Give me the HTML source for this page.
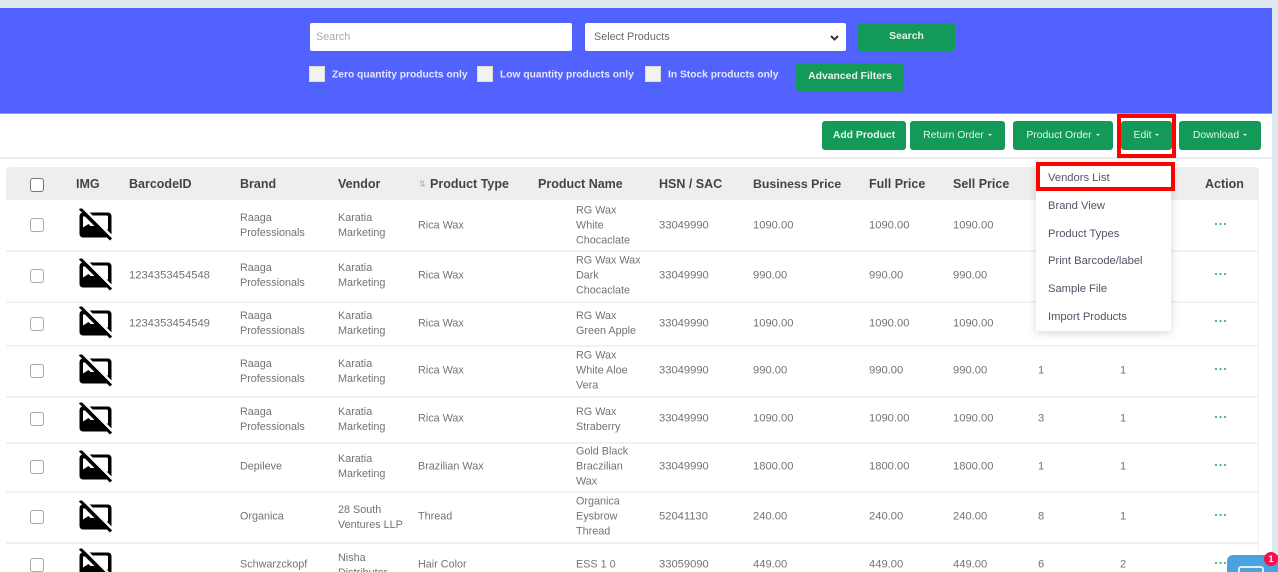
<!DOCTYPE html>
<html><head><meta charset="utf-8"><title>Products</title>
<style>
html,body{margin:0;padding:0}
html{width:1278px;height:572px;overflow:hidden}
body{width:1278px;height:572px;overflow:hidden;position:relative;background:#fff;font-family:"Liberation Sans",sans-serif}
div,span{box-sizing:border-box}
.a{position:absolute}
.c{position:absolute;transform:translateY(-50%);margin-top:1px;font-size:10.8px;line-height:15px;color:#737373;white-space:nowrap}
.n{font-size:11.2px}
.h{position:absolute;top:184px;transform:translateY(-50%);font-size:12.5px;font-weight:bold;color:#444;white-space:nowrap}
.b{position:absolute;background:#149a58;border-radius:3px;color:#e6f5ec;font-size:10.4px;text-align:center;white-space:nowrap}
.t{top:121px;height:29px;line-height:30px}
.t i{display:inline-block;width:0;height:0;border:2.5px solid transparent;border-top-color:#e6f5ec;border-bottom:0;margin-left:4px;vertical-align:2px}
.ck{position:absolute;left:30px;width:14px;height:14px;border:1.5px solid #a8a8a8;border-radius:3px;background:#fff;transform:translateY(-50%)}
.sq{position:absolute;top:66px;width:16px;height:16px;background:#f2f2f2;border:1px solid #ddd}
.l{position:absolute;top:75px;transform:translateY(-50%);font-size:10.25px;font-weight:bold;color:#e4e6ff;white-space:nowrap}
.ln{position:absolute;left:6px;width:1253px;height:2px;background:#f2f2f2}
.d{position:absolute;left:1215px;width:2.4px;height:2.4px;border-radius:50%;background:#2a9d6b;box-shadow:4.5px 0 #2a9d6b,9px 0 #2a9d6b}
.m{position:absolute;left:1048px;transform:translateY(-50%);margin-top:1px;font-size:11.2px;color:#555266;white-space:nowrap}
.ic{position:absolute;left:79px;width:33px;height:33px;transform:translateY(-50%)}
</style></head><body>
<svg width="0" height="0" style="position:absolute"><defs><symbol id="x" viewBox="0 0 33 33">
<rect x="0.500" y="4" width="32" height="25" rx="3.500" fill="#000"/>
<path d="M10 7H27.500a1.500 1.500 0 0 1 1.500 1.500V21L25 21Z" fill="#fff"/>
<path d="M4 8H6L13 15L15.500 17.500H11.500L9.500 15.500L4 19Z" fill="#fff"/>
<path d="M1 0L32 31" stroke="#fff" stroke-width="4.500" transform="translate(1.500 -1)"/>
<path d="M1 0L32 31" stroke="#000" stroke-width="3"/>
</symbol></defs></svg>

<div class="a" style="left:0;top:0;width:1278px;height:8px;background:#e1e8f0"></div>
<div class="a" style="left:1272px;top:0;width:6px;height:572px;background:#e1e8f0"></div>
<div class="a" style="left:0;top:8px;width:1272px;height:105px;background:#5262ff"></div>
<div class="a" style="left:0;top:113px;width:1272px;height:1px;background:#6fa5ff"></div>
<div class="a" style="left:0;top:157px;width:1272px;height:2px;background:#ececec"></div>

<div class="a" style="left:310px;top:23px;width:262px;height:28px;background:#fff;border-radius:2px;font-size:10.8px;line-height:28px;padding-left:6px;color:#a9a9a9">Search</div>
<div class="a" style="left:585px;top:23px;width:261px;height:28px;background:#fff;border-radius:2px;font-size:10.8px;line-height:28px;padding-left:9px;color:#6b6b6b">Select Products
<svg class="a" style="left:244px;top:11px" width="11" height="8" viewBox="0 0 11 8"><path d="M2 2L5.500 5.500L9 2" fill="none" stroke="#333" stroke-width="2"/></svg></div>
<div class="b" style="left:858px;top:23px;width:97px;height:28px;line-height:28px;font-weight:bold">Search</div>
<div class="sq" style="left:309px"></div><div class="l" style="left:332px">Zero quantity products only</div>
<div class="sq" style="left:477px"></div><div class="l" style="left:500px">Low quantity products only</div>
<div class="sq" style="left:645px"></div><div class="l" style="left:668px">In Stock products only</div>
<div class="b" style="left:796px;top:63px;width:108px;height:28px;line-height:28px;font-weight:bold">Advanced Filters</div>

<div class="b t" style="left:822px;width:84px;font-weight:bold">Add Product</div>
<div class="b t" style="left:910px;width:95px">Return Order<i></i></div>
<div class="b t" style="left:1013px;width:100px">Product Order<i></i></div>
<div class="b t" style="left:1121px;width:51px">Edit<i></i></div>
<div class="b t" style="left:1179px;width:82px">Download<i></i></div>
<div class="a" style="left:1117px;top:114px;width:59px;height:44px;border:4px solid #f00"></div>

<div class="a" style="left:6px;top:167px;width:1253px;height:33px;background:#eee;border-radius:4px 4px 0 0"></div>
<div class="a" style="left:1258px;top:200px;width:1px;height:372px;background:#f0f0f0"></div>
<div class="ck" style="top:185px;border-color:#777"></div>
<div class="h" style="left:76px">IMG</div>
<div class="h" style="left:129px">BarcodeID</div>
<div class="h" style="left:240px">Brand</div>
<div class="h" style="left:338px">Vendor</div>
<div class="h" style="left:419px;font-size:8px;font-weight:normal;color:#aaa">⇅</div>
<div class="h" style="left:430px">Product Type</div>
<div class="h" style="left:538px">Product Name</div>
<div class="h" style="left:659px">HSN / SAC</div>
<div class="h" style="left:753px;font-size:12.3px">Business Price</div>
<div class="h" style="left:869px">Full Price</div>
<div class="h" style="left:953px">Sell Price</div>
<div class="h" style="left:1171px">t</div>
<div class="h" style="left:1205px">Action</div>

<div class="ln" style="top:250px"></div><div class="ln" style="top:301px"></div><div class="ln" style="top:345px"></div><div class="ln" style="top:396px"></div><div class="ln" style="top:442px"></div><div class="ln" style="top:491px"></div><div class="ln" style="top:542px"></div>

<!-- row 1 -->
<div class="ck" style="top:225px"></div><svg class="ic" style="top:225px"><use href="#x"/></svg>
<div class="c" style="left:240px;top:225px">Raaga<br>Professionals</div><div class="c" style="left:338px;top:225px">Karatia<br>Marketing</div><div class="c" style="left:418px;top:225px">Rica Wax</div><div class="c" style="left:576px;top:225px">RG Wax<br>White<br>Chocaclate</div><div class="c n" style="left:659px;top:225px">33049990</div><div class="c n" style="left:753px;top:225px">1090.00</div><div class="c n" style="left:869px;top:225px">1090.00</div><div class="c n" style="left:953px;top:225px">1090.00</div><div class="d" style="top:223px"></div>
<!-- row 2 -->
<div class="ck" style="top:276px"></div><svg class="ic" style="top:275px"><use href="#x"/></svg>
<div class="c n" style="left:129px;top:275px">1234353454548</div><div class="c" style="left:240px;top:275px">Raaga<br>Professionals</div><div class="c" style="left:338px;top:275px">Karatia<br>Marketing</div><div class="c" style="left:418px;top:275px">Rica Wax</div><div class="c" style="left:576px;top:275px">RG Wax Wax<br>Dark<br>Chocaclate</div><div class="c n" style="left:659px;top:275px">33049990</div><div class="c n" style="left:753px;top:275px">990.00</div><div class="c n" style="left:869px;top:275px">990.00</div><div class="c n" style="left:953px;top:275px">990.00</div><div class="d" style="top:273px"></div>
<!-- row 3 -->
<div class="ck" style="top:324px"></div><svg class="ic" style="top:323px"><use href="#x"/></svg>
<div class="c n" style="left:129px;top:323px">1234353454549</div><div class="c" style="left:240px;top:323px">Raaga<br>Professionals</div><div class="c" style="left:338px;top:323px">Karatia<br>Marketing</div><div class="c" style="left:418px;top:323px">Rica Wax</div><div class="c" style="left:576px;top:323px">RG Wax<br>Green Apple</div><div class="c n" style="left:659px;top:323px">33049990</div><div class="c n" style="left:753px;top:323px">1090.00</div><div class="c n" style="left:869px;top:323px">1090.00</div><div class="c n" style="left:953px;top:323px">1090.00</div><div class="d" style="top:320px"></div>
<!-- row 4 -->
<div class="ck" style="top:371px"></div><svg class="ic" style="top:371px"><use href="#x"/></svg>
<div class="c" style="left:240px;top:371px">Raaga<br>Professionals</div><div class="c" style="left:338px;top:371px">Karatia<br>Marketing</div><div class="c" style="left:418px;top:370px">Rica Wax</div><div class="c" style="left:576px;top:370px">RG Wax<br>White Aloe<br>Vera</div><div class="c n" style="left:659px;top:370px">33049990</div><div class="c n" style="left:753px;top:370px">990.00</div><div class="c n" style="left:869px;top:370px">990.00</div><div class="c n" style="left:953px;top:370px">990.00</div><div class="c n" style="left:1038px;top:370px">1</div><div class="c n" style="left:1120px;top:370px">1</div><div class="d" style="top:368px"></div>
<!-- row 5 -->
<div class="ck" style="top:419px"></div><svg class="ic" style="top:419px"><use href="#x"/></svg>
<div class="c" style="left:240px;top:419px">Raaga<br>Professionals</div><div class="c" style="left:338px;top:419px">Karatia<br>Marketing</div><div class="c" style="left:418px;top:418px">Rica Wax</div><div class="c" style="left:576px;top:419px">RG Wax<br>Straberry</div><div class="c n" style="left:659px;top:418px">33049990</div><div class="c n" style="left:753px;top:418px">1090.00</div><div class="c n" style="left:869px;top:418px">1090.00</div><div class="c n" style="left:953px;top:418px">1090.00</div><div class="c n" style="left:1038px;top:418px">3</div><div class="c n" style="left:1120px;top:418px">1</div><div class="d" style="top:416px"></div>
<!-- row 6 -->
<div class="ck" style="top:467px"></div><svg class="ic" style="top:467px"><use href="#x"/></svg>
<div class="c" style="left:240px;top:466px">Depileve</div><div class="c" style="left:338px;top:466px">Karatia<br>Marketing</div><div class="c" style="left:418px;top:466px">Brazilian Wax</div><div class="c" style="left:576px;top:466px">Gold Black<br>Braczilian<br>Wax</div><div class="c n" style="left:659px;top:466px">33049990</div><div class="c n" style="left:753px;top:466px">1800.00</div><div class="c n" style="left:869px;top:466px">1800.00</div><div class="c n" style="left:953px;top:466px">1800.00</div><div class="c n" style="left:1038px;top:466px">1</div><div class="c n" style="left:1120px;top:466px">1</div><div class="d" style="top:464px"></div>
<!-- row 7 -->
<div class="ck" style="top:517px"></div><svg class="ic" style="top:517px"><use href="#x"/></svg>
<div class="c" style="left:240px;top:516px">Organica</div><div class="c" style="left:338px;top:517px">28 South<br>Ventures LLP</div><div class="c" style="left:418px;top:516px">Thread</div><div class="c" style="left:576px;top:516px">Organica<br>Eysbrow<br>Thread</div><div class="c n" style="left:659px;top:516px">52041130</div><div class="c n" style="left:753px;top:516px">240.00</div><div class="c n" style="left:869px;top:516px">240.00</div><div class="c n" style="left:953px;top:516px">240.00</div><div class="c n" style="left:1038px;top:516px">8</div><div class="c n" style="left:1120px;top:516px">1</div><div class="d" style="top:514px"></div>
<!-- row 8 -->
<div class="ck" style="top:565px"></div><svg class="ic" style="top:565px"><use href="#x"/></svg>
<div class="c" style="left:240px;top:564px">Schwarzckopf</div><div class="c" style="left:338px;top:565px">Nisha<br>Distributor</div><div class="c" style="left:418px;top:564px">Hair Color</div><div class="c" style="left:576px;top:564px">ESS 1 0</div><div class="c n" style="left:659px;top:564px">33059090</div><div class="c n" style="left:753px;top:564px">449.00</div><div class="c n" style="left:869px;top:564px">449.00</div><div class="c n" style="left:953px;top:564px">449.00</div><div class="c n" style="left:1038px;top:564px">6</div><div class="c n" style="left:1120px;top:564px">2</div><div class="d" style="top:562px"></div>

<!-- dropdown -->
<div class="a" style="left:1036px;top:162px;width:135px;height:169px;background:#fff;box-shadow:0 2px 8px rgba(0,0,0,.16)"></div>
<div class="a" style="left:1036px;top:162px;width:139px;height:29px;border:4px solid #f00"></div>
<div class="m" style="top:177px">Vendors List</div>
<div class="m" style="top:205px">Brand View</div>
<div class="m" style="top:233px">Product Types</div>
<div class="m" style="top:260px">Print Barcode/label</div>
<div class="m" style="top:288px">Sample File</div>
<div class="m" style="top:316px">Import Products</div>

<!-- chat -->
<div class="a" style="left:1227px;top:555px;width:51px;height:17px;background:#4aa3df;border-radius:6px 0 0 0"></div>
<div class="a" style="left:1238px;top:566px;width:26px;height:12px;border:2px solid #dff0fb;border-radius:3px"></div>
<div class="a" style="left:1264px;top:552px;width:14px;height:14px;border-radius:50%;background:#f0134d;color:#fff;font-size:9px;font-weight:bold;line-height:14px;text-align:center">1</div>
</body></html>
